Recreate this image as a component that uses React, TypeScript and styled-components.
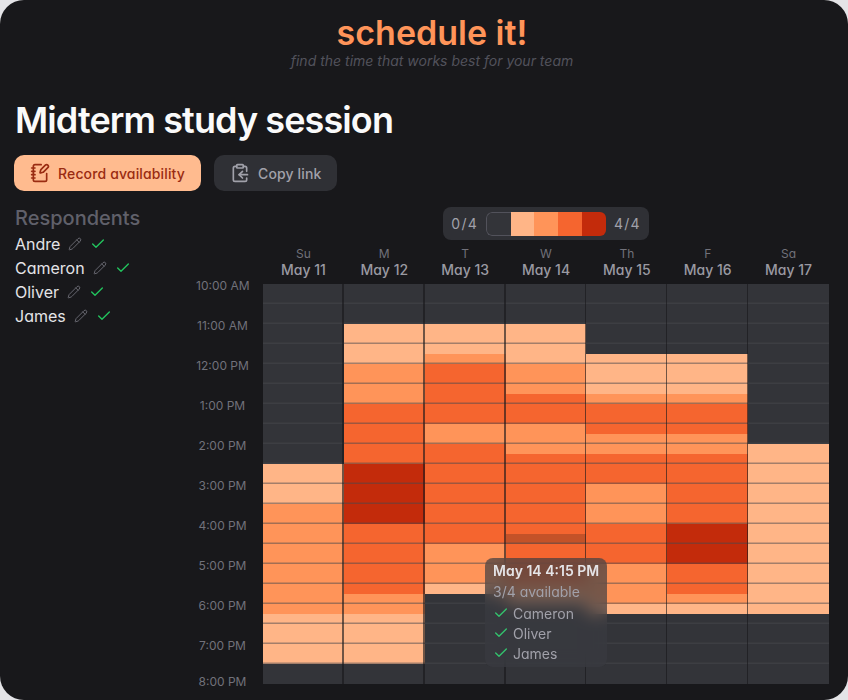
import { NotebookPen, ClipboardCopy, Pencil, Check } from 'lucide-react';
import { createGlobalStyle, styled } from 'styled-components';

type Day = {
  short: string;
  label: string;
  // [level, number of 15 minute slots], top to bottom
  runs: [number, number][];
};

const LEVELS = ['#333439', '#ffb587', '#ff9459', '#f5652f', '#c32b0b'];

const DAYS: Day[] = [
  { short: 'Su', label: 'May 11', runs: [[0, 18], [1, 4], [2, 11], [1, 5], [0, 2]] },
  { short: 'M', label: 'May 12', runs: [[0, 4], [1, 4], [2, 4], [3, 6], [4, 6], [3, 7], [2, 2], [1, 5], [0, 2]] },
  { short: 'T', label: 'May 13', runs: [[0, 4], [1, 3], [2, 1], [3, 6], [2, 2], [3, 10], [2, 4], [1, 1], [0, 9]] },
  { short: 'W', label: 'May 14', runs: [[0, 4], [1, 4], [2, 3], [3, 3], [2, 3], [3, 13], [2, 1], [1, 1], [0, 8]] },
  { short: 'Th', label: 'May 15', runs: [[0, 7], [1, 4], [2, 1], [3, 3], [2, 2], [3, 3], [2, 4], [3, 4], [2, 4], [1, 1], [0, 7]] },
  { short: 'F', label: 'May 16', runs: [[0, 7], [1, 4], [2, 1], [3, 3], [2, 2], [3, 7], [4, 4], [3, 3], [2, 1], [1, 1], [0, 7]] },
  { short: 'Sa', label: 'May 17', runs: [[0, 16], [1, 17], [0, 7]] },
];

const TIMES = [
  '10:00 AM', '11:00 AM', '12:00 PM', '1:00 PM', '2:00 PM', '3:00 PM',
  '4:00 PM', '5:00 PM', '6:00 PM', '7:00 PM', '8:00 PM',
];

const RESPONDENTS = ['Andre', 'Cameron', 'Oliver', 'James'];
const AVAILABLE = ['Cameron', 'Oliver', 'James'];

// the slot under the mouse: May 14, 4:15 PM
const HOVER_DAY = 3;
const HOVER_SLOT = 25;

const expand = (runs: [number, number][]) =>
  runs.flatMap(([level, count]) => Array<number>(count).fill(level));

const App = () => {
  return (
    <>
      <GlobalStyle />
      <Panel>
        <Brand>
          <Logo>schedule it!</Logo>
          <Tagline>find the time that works best for your team</Tagline>
        </Brand>
        <EventTitle>Midterm study session</EventTitle>
        <Actions>
          <ActionButton type="button" $primary>
            <NotebookPen size={20} strokeWidth={2} />
            Record availability
          </ActionButton>
          <ActionButton type="button">
            <ClipboardCopy size={20} strokeWidth={2} />
            Copy link
          </ActionButton>
        </Actions>
        <Main>
          <Sidebar>
            <SidebarTitle>Respondents</SidebarTitle>
            {RESPONDENTS.map((name) => (
              <RespondentRow key={name}>
                {name}
                <PencilIcon size={14} strokeWidth={1.5} />
                <Check size={16} strokeWidth={2} color="#22c55e" />
              </RespondentRow>
            ))}
          </Sidebar>
          <Scheduler>
            <Legend>
              <LegendText>0/4</LegendText>
              <LegendBar>
                {LEVELS.map((color) => (
                  <LegendSwatch key={color} $color={color} />
                ))}
              </LegendBar>
              <LegendText>4/4</LegendText>
            </Legend>
            <DayHeaders>
              {DAYS.map((day) => (
                <DayHeader key={day.label}>
                  <DayShort>{day.short}</DayShort>
                  <DayLabel>{day.label}</DayLabel>
                </DayHeader>
              ))}
            </DayHeaders>
            <TimeRail>
              {TIMES.map((time) => (
                <TimeLabel key={time}>{time}</TimeLabel>
              ))}
            </TimeRail>
            <Grid>
              {DAYS.map((day, dayIndex) => (
                <DayColumn key={day.label}>
                  {expand(day.runs).map((level, slot) => (
                    <Slot
                      key={slot}
                      $level={level}
                      $lined={slot % 2 === 1 && slot < 39}
                      $hovered={dayIndex === HOVER_DAY && slot === HOVER_SLOT}
                    />
                  ))}
                </DayColumn>
              ))}
              <Tooltip>
                <TooltipTitle>May 14 4:15 PM</TooltipTitle>
                <TooltipCount>3/4 available</TooltipCount>
                {AVAILABLE.map((name) => (
                  <TooltipRow key={name}>
                    <Check size={16} strokeWidth={2} color="#34c46e" />
                    {name}
                  </TooltipRow>
                ))}
              </Tooltip>
            </Grid>
          </Scheduler>
        </Main>
      </Panel>
    </>
  );
};

export default App;

const GlobalStyle = createGlobalStyle`
  html, body {
    margin: 0;
    padding: 0;
    background: #e4e4e7;
  }
  body {
    font-family: Inter, "Liberation Sans", sans-serif;
    font-feature-settings: "cv11";
  }
`;

const Panel = styled.div`
  box-sizing: border-box;
  width: 848px;
  height: 700px;
  padding: 15px 19px 0 15px;
  overflow: hidden;
  background: #18181b;
  border-radius: 24px;
`;

const Brand = styled.header`
  display: flex;
  flex-direction: column;
  align-items: center;
  padding-left: 20px;
`;

const Logo = styled.div`
  font-size: 34px;
  line-height: 36px;
  font-weight: 600;
  color: #ff9459;
`;

const Tagline = styled.div`
  font-size: 14px;
  line-height: 20px;
  font-style: italic;
  color: #52525b;
`;

const EventTitle = styled.h1`
  margin: 29px 0 15px;
  font-size: 36px;
  line-height: 40px;
  font-weight: 600;
  letter-spacing: -0.9px;
  color: #fafafa;
`;

const Actions = styled.div`
  display: flex;
  gap: 13px;
  margin-left: -1px;
`;

const ActionButton = styled.button<{ $primary?: boolean }>`
  display: flex;
  align-items: center;
  gap: 8px;
  height: 36px;
  padding: 0 16px;
  border: none;
  border-radius: 10px;
  font-family: inherit;
  font-feature-settings: inherit;
  font-size: 14px;
  font-weight: 500;
  letter-spacing: 0.14px;
  background: ${(props) => (props.$primary ? '#ffbb8f' : '#2f3035')};
  color: ${(props) => (props.$primary ? '#9a2c12' : '#a1a1aa')};
`;

const Main = styled.div`
  display: flex;
  justify-content: space-between;
  margin-top: 16px;
`;

const Sidebar = styled.aside`
  display: flex;
  flex-direction: column;
`;

const SidebarTitle = styled.h2`
  margin: 0 0 3px;
  font-size: 20px;
  line-height: 22px;
  font-weight: 500;
  color: #60606a;
`;

const RespondentRow = styled.div`
  display: flex;
  align-items: center;
  gap: 8px;
  height: 24px;
  font-size: 16px;
  color: #e4e4e7;
`;

const PencilIcon = styled(Pencil)`
  color: #71717a;
`;

const Scheduler = styled.section`
  display: grid;
  grid-template-columns: 67px 566px;
  grid-template-rows: 39px 38px 400px;
`;

const Legend = styled.div`
  grid-column: 2;
  justify-self: center;
  display: flex;
  align-items: center;
  gap: 8px;
  height: 33px;
  padding: 0 8px;
  background: #2f3035;
  border-radius: 8px;
`;

const LegendText = styled.span`
  font-size: 14px;
  letter-spacing: 1.2px;
  color: #a1a1aa;
`;

const LegendBar = styled.div`
  display: flex;
  width: 120px;
  height: 24px;
  overflow: hidden;
  border-radius: 6px;
`;

const LegendSwatch = styled.div<{ $color: string }>`
  flex: 1;
  background: ${(props) => props.$color};
  &:first-child {
    border: 1px solid #52525b;
    border-right: none;
    border-radius: 6px 0 0 6px;
  }
`;

const DayHeaders = styled.div`
  grid-column: 2;
  display: grid;
  grid-template-columns: repeat(7, 1fr);
`;

const DayHeader = styled.div`
  display: flex;
  flex-direction: column;
  align-items: center;
`;

const DayShort = styled.span`
  font-size: 12px;
  line-height: 16px;
  color: #71717a;
`;

const DayLabel = styled.span`
  font-size: 14px;
  line-height: 16px;
  font-weight: 500;
  color: #9a9aa2;
`;

const TimeRail = styled.div`
  grid-column: 1;
  grid-row: 3;
  display: flex;
  flex-direction: column;
  margin-top: -8px;
  padding-right: 14px;
`;

const TimeLabel = styled.span`
  flex: 0 0 40px;
  font-size: 12px;
  line-height: 20px;
  white-space: nowrap;
  text-align: center;
  color: #71717a;
  &:last-child {
    margin-top: -4px;
  }
`;

const Grid = styled.div`
  grid-column: 2;
  grid-row: 3;
  position: relative;
  display: grid;
  grid-template-columns: repeat(7, 1fr);
`;

const DayColumn = styled.div`
  position: relative;
  display: flex;
  flex-direction: column;
  &:not(:nth-child(7))::after {
    content: '';
    position: absolute;
    top: 0;
    bottom: 0;
    right: 0;
    width: 1.5px;
    background: rgba(24, 24, 27, 0.62);
  }
`;

const Slot = styled.div<{ $level: number; $lined: boolean; $hovered: boolean }>`
  height: 10px;
  background: ${(props) => (props.$hovered ? '#c45228' : LEVELS[props.$level])};
  box-shadow: ${(props) =>
    props.$lined ? 'inset 0 -1.5px 0 rgba(72, 72, 78, 0.5)' : 'none'};
`;

const Tooltip = styled.div`
  position: absolute;
  left: 222px;
  top: 274px;
  z-index: 2;
  box-sizing: border-box;
  width: 122px;
  height: 109px;
  padding: 3px 8px;
  border-radius: 8px;
  background: rgba(58, 59, 65, 0.68);
  backdrop-filter: blur(8px);
`;

const TooltipTitle = styled.div`
  font-size: 14px;
  line-height: 20px;
  font-weight: 600;
  white-space: nowrap;
  color: #e4e4e7;
`;

const TooltipCount = styled.div`
  margin: 1px 0 1px;
  font-size: 14px;
  line-height: 20px;
  color: #a1a1aa;
`;

const TooltipRow = styled.div`
  display: flex;
  align-items: center;
  gap: 4px;
  height: 20px;
  font-size: 14px;
  color: #a1a1aa;
`;
